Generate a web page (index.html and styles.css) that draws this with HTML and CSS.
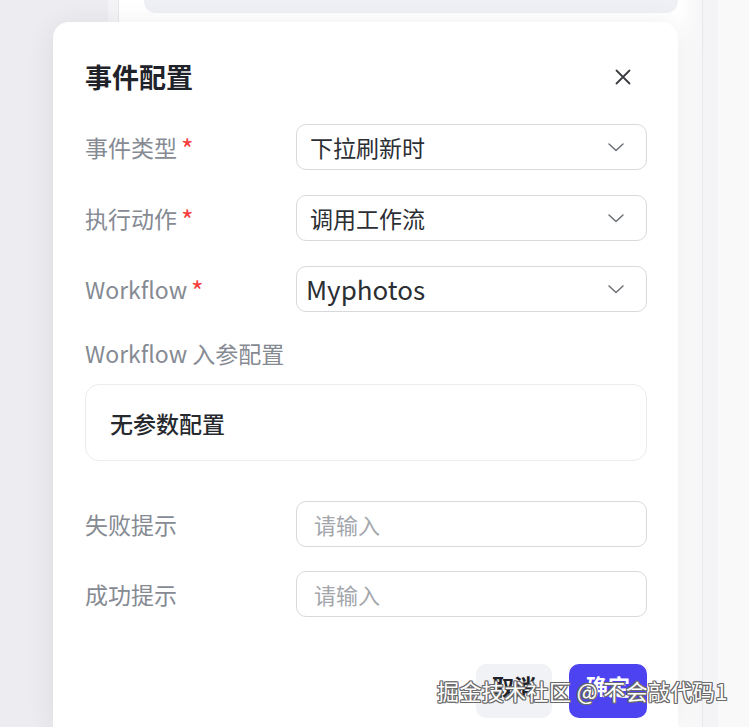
FILE: index.html
```html
<!DOCTYPE html>
<html lang="zh-CN">
<head>
<meta charset="utf-8">
<title>事件配置</title>
<link rel="stylesheet" href="styles.css">
</head>
<body>
<div class="backdrop">
  <div class="sidebar"></div>
  <div class="strip"></div>
  <div class="main">
    <div class="top-card"></div>
  </div>
  <div class="strip strip-right"></div>
  <div class="edge"></div>
</div>

<div class="modal">
  <div class="modal-head">
    <div class="modal-title">事件配置</div>
    <svg class="close" width="16" height="16" viewBox="0 0 16 16"><path d="M1.5 1.5 L14.5 14.5 M14.5 1.5 L1.5 14.5" stroke="#3a3d42" stroke-width="1.8" stroke-linecap="round" fill="none"/></svg>
  </div>

  <div class="group group-selects">
    <div class="row">
      <div class="label">事件类型<span class="req">*</span></div>
      <div class="field select">
        <span class="value">下拉刷新时</span>
        <svg class="chev" width="16" height="9" viewBox="0 0 16 9"><path d="M1 1 L8 7.5 L15 1" stroke="#6b6f76" stroke-width="1.5" fill="none" stroke-linecap="round" stroke-linejoin="round"/></svg>
      </div>
    </div>
    <div class="row">
      <div class="label">执行动作<span class="req">*</span></div>
      <div class="field select">
        <span class="value">调用工作流</span>
        <svg class="chev" width="16" height="9" viewBox="0 0 16 9"><path d="M1 1 L8 7.5 L15 1" stroke="#6b6f76" stroke-width="1.5" fill="none" stroke-linecap="round" stroke-linejoin="round"/></svg>
      </div>
    </div>
    <div class="row">
      <div class="label">Workflow<span class="req">*</span></div>
      <div class="field select select-latin">
        <span class="value value-latin">Myphotos</span>
        <svg class="chev" width="16" height="9" viewBox="0 0 16 9"><path d="M1 1 L8 7.5 L15 1" stroke="#6b6f76" stroke-width="1.5" fill="none" stroke-linecap="round" stroke-linejoin="round"/></svg>
      </div>
    </div>
  </div>

  <div class="section-label">Workflow 入参配置</div>
  <div class="params-box">无参数配置</div>

  <div class="group group-inputs">
    <div class="row">
      <div class="label">失败提示</div>
      <div class="field input"><span class="placeholder">请输入</span></div>
    </div>
    <div class="row">
      <div class="label">成功提示</div>
      <div class="field input"><span class="placeholder">请输入</span></div>
    </div>
  </div>

  <div class="footer">
    <div class="btn btn-cancel">取消</div>
    <div class="btn btn-ok">确定</div>
  </div>
</div>

<div class="watermark">掘金技术社区 @ 不会敲代码1</div>
</body>
</html>
```

FILE: styles.css
```css
* { box-sizing: border-box; }

html, body {
  margin: 0;
  padding: 0;
}

body {
  width: 749px;
  height: 727px;
  overflow: hidden;
  position: relative;
  font-family: "Noto Sans CJK SC", "Noto Sans", sans-serif;
  background: #ffffff;
}

.backdrop {
  display: flex;
  height: 727px;
}

.sidebar {
  width: 108px;
  background: #ededf1;
}

.strip {
  width: 11px;
  background: #f4f4f7;
  border-right: 1px solid #e7e7eb;
}

.strip-right {
  width: 16px;
  border-right: none;
  border-left: 1px solid #e7e7eb;
}

.main {
  width: 583px;
  background: linear-gradient(to right, #ffffff 0, #ffffff 560px, #f6f6f8 583px);
  padding-left: 25px;
  padding-right: 24px;
}

.top-card {
  height: 13px;
  background: #eff0f5;
  border-radius: 0 0 12px 12px;
}

.edge {
  flex: 1;
  background: #f9f9fa;
}

.modal {
  position: absolute;
  left: 53px;
  top: 22px;
  width: 625px;
  height: 705px;
  background: #ffffff;
  border-radius: 16px 16px 0 0;
  box-shadow: 0 4px 28px rgba(20, 20, 40, 0.09);
  padding: 37px 31px 0 32px;
  display: flex;
  flex-direction: column;
}

.modal-head {
  height: 36px;
  display: flex;
  align-items: center;
  justify-content: space-between;
}

.modal-title {
  font-size: 27px;
  font-weight: 700;
  color: #1f2329;
  line-height: 36px;
}

.close {
  margin-right: 16px;
}

.group {
  display: flex;
  flex-direction: column;
}

.group-selects {
  margin-top: 29px;
  gap: 25px;
}

.group-inputs {
  margin-top: 40px;
  gap: 24px;
}

.row {
  display: flex;
  align-items: center;
  height: 46px;
}

.label {
  width: 211px;
  flex: none;
  font-size: 23px;
  color: #858a93;
  line-height: 32px;
  display: flex;
  align-items: center;
}

.req {
  color: #f53f3f;
  margin-left: 4px;
  font-size: 27px;
  line-height: 32px;
  padding-top: 4px;
}

.field {
  flex: 1;
  height: 46px;
  border: 1px solid #d8d9dc;
  border-radius: 10px;
  display: flex;
  align-items: center;
  padding-left: 13px;
  padding-right: 22px;
}

.select {
  justify-content: space-between;
}

.select-latin {
  padding-left: 9px;
}

.value {
  font-size: 23px;
  color: #2b2e33;
  line-height: 32px;
}

.value-latin {
  font-size: 26px;
}

.input {
  padding-left: 17px;
}

.placeholder {
  font-size: 22px;
  color: #a3a6ab;
  line-height: 32px;
}

.section-label {
  margin-top: 25px;
  font-size: 23px;
  color: #858a93;
  line-height: 32px;
}

.params-box {
  margin-top: 15px;
  height: 77px;
  border: 1px solid #ebecee;
  border-radius: 14px;
  display: flex;
  align-items: center;
  padding-left: 24px;
  font-size: 23px;
  font-weight: 500;
  color: #26292e;
}

.footer {
  margin-top: 47px;
  display: flex;
  justify-content: flex-end;
  gap: 17px;
}

.btn {
  height: 54px;
  border-radius: 10px;
  display: flex;
  align-items: center;
  justify-content: center;
  padding-bottom: 12px;
  font-size: 22px;
  font-weight: 700;
}

.btn-cancel {
  width: 76px;
  background: #f1f2f5;
  color: #1f2329;
}

.btn-ok {
  width: 78px;
  background: #4d43f0;
  color: #ffffff;
}

.watermark {
  position: absolute;
  left: 437px;
  top: 675px;
  font-size: 22px;
  line-height: 30px;
  letter-spacing: 0.4px;
  color: #ffffff;
  white-space: nowrap;
  text-shadow:
    1px 0 0 #6a6a6a, -1px 0 0 #6a6a6a, 0 1px 0 #6a6a6a, 0 -1px 0 #6a6a6a,
    1px 1px 0 #6a6a6a, -1px -1px 0 #6a6a6a, 1px -1px 0 #6a6a6a, -1px 1px 0 #6a6a6a;
}
```
